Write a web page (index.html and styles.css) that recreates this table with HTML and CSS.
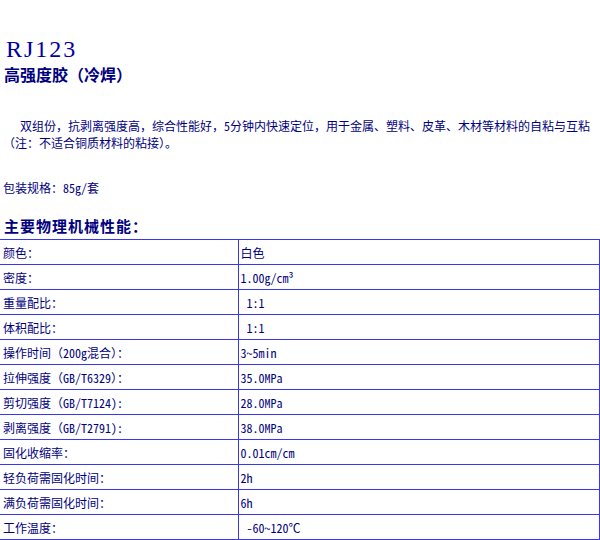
FILE: index.html
```html
<!DOCTYPE html>
<html lang="zh-CN">
<head>
<meta charset="utf-8">
<title>RJ123 高强度胶（冷焊）</title>
<link rel="stylesheet" href="styles.css">
</head>
<body>
<div class="page">
  <h1 class="title">RJ123</h1>
  <h2 class="subtitle">高强度胶（冷焊）</h2>
  <p class="desc">双组份，抗剥离强度高，综合性能好，5分钟内快速定位，用于金属、塑料、皮革、木材等材料的自粘与互粘（注：不适合铜质材料的粘接）。</p>
  <p class="pack">包装规格：85g/套</p>
  <h3 class="section">主要物理机械性能：</h3>
  <table class="props">
    <tr><td class="label">颜色：</td><td class="value">白色</td></tr>
    <tr><td class="label">密度：</td><td class="value">1.00g/cm³</td></tr>
    <tr><td class="label">重量配比：</td><td class="value">&nbsp;1:1</td></tr>
    <tr><td class="label">体积配比：</td><td class="value">&nbsp;1:1</td></tr>
    <tr><td class="label">操作时间（200g混合）：</td><td class="value">3~5min</td></tr>
    <tr><td class="label">拉伸强度（GB/T6329）：</td><td class="value">35.0MPa</td></tr>
    <tr><td class="label">剪切强度（GB/T7124):</td><td class="value">28.0MPa</td></tr>
    <tr><td class="label">剥离强度（GB/T2791):</td><td class="value">38.0MPa</td></tr>
    <tr><td class="label">固化收缩率：</td><td class="value">0.01cm/cm</td></tr>
    <tr><td class="label">轻负荷需固化时间：</td><td class="value">2h</td></tr>
    <tr><td class="label">满负荷需固化时间：</td><td class="value">6h</td></tr>
    <tr><td class="label">工作温度：</td><td class="value">&nbsp;-60~120℃</td></tr>
  </table>
</div>
</body>
</html>
```
FILE: styles.css
```css
html, body {
  margin: 0;
  padding: 0;
  background: #ffffff;
}

.page {
  color: #000080;
  font-family: "Noto Sans Mono CJK SC", "Noto Sans CJK SC", "Liberation Sans", sans-serif;
  font-size: 12px;
}

.title {
  margin: 35px 0 0 6px;
  font-family: "Liberation Serif", "Noto Sans CJK SC", serif;
  font-size: 24px;
  font-weight: normal;
  line-height: 28px;
  letter-spacing: 2px;
  color: #0000a0;
}

.subtitle {
  margin: 1px 0 0 4px;
  font-size: 16px;
  font-weight: bold;
  line-height: 20px;
}

.desc {
  margin: 33px 0 0 3px;
  padding-right: 4px;
  text-indent: 17px;
  line-height: 17px;
}

.pack {
  margin: 29px 0 0 3px;
  line-height: 16px;
}

.section {
  margin: 21px 0 0 4px;
  font-size: 15px;
  font-weight: bold;
  line-height: 18px;
  letter-spacing: 1px;
}

.props {
  margin: 4px 0 0 0;
  width: 600px;
  border-collapse: collapse;
  table-layout: fixed;
}

.props td {
  height: 25px;
  padding: 2px 0 0 2px;
  border: 1px solid #3636f4;
  vertical-align: middle;
  white-space: nowrap;
  line-height: 16px;
  box-sizing: border-box;
}

.props .label {
  width: 238px;
  border-left: none;
  padding-left: 3px;
}

.props .value {
  padding-left: 2px;
}
```
